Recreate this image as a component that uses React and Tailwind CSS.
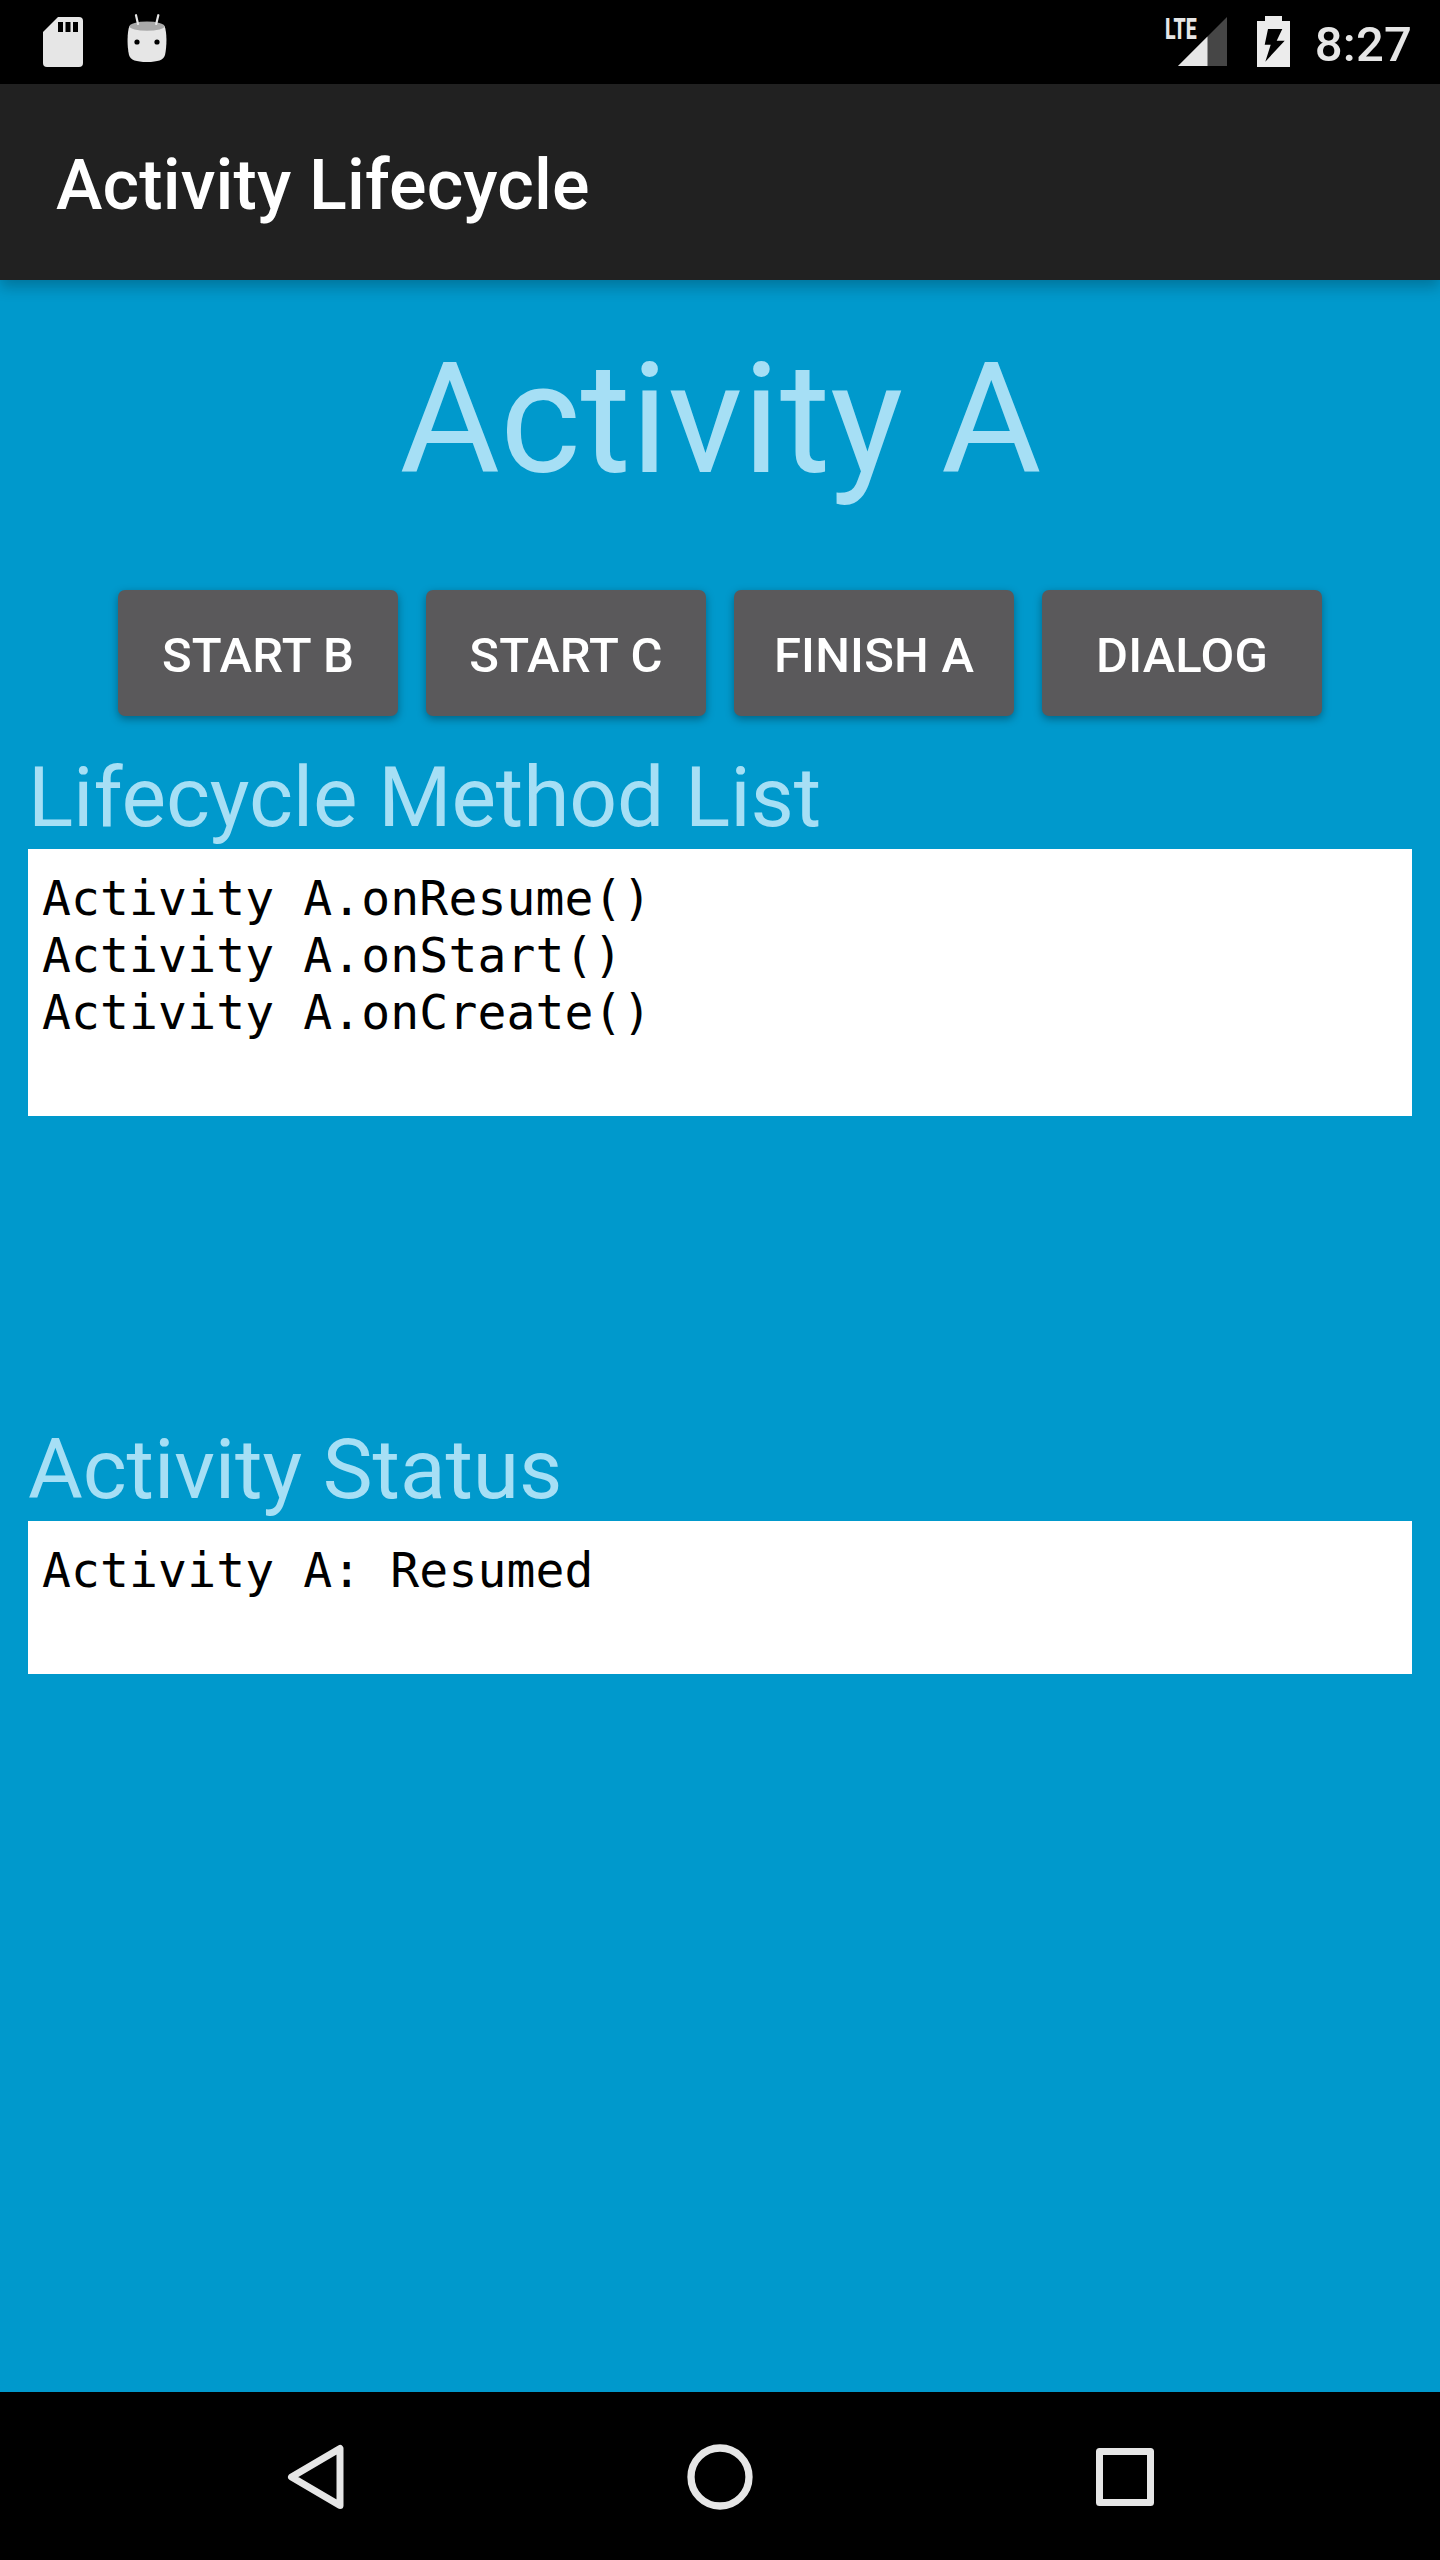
const heading = "relative text-[84px] leading-[98px] tracking-[-0.12px] text-[#a6dff5]";
const logBox = "bg-white px-3.5 font-['DejaVu_Sans_Mono',monospace] text-[48px] leading-[57px] tracking-[0.13px] text-black whitespace-pre";

function SdCardIcon() {
  return (
    <svg width="40" height="50" viewBox="0 0 40 50" fill="#e6e6e6">
      <path d="M15 0H36a4 4 0 0 1 4 4V46a4 4 0 0 1-4 4H4a4 4 0 0 1-4-4V15Z" />
      <path d="M15 5h5v10h-5zM22.500 5h5v10h-5zM30 5h5v10h-5z" fill="#000" />
    </svg>
  );
}

function RobotIcon() {
  return (
    <svg width="40" height="48" viewBox="0 0 40 48">
      <path d="M2.500 12C0 18 0 32 2 41C3.500 46 9 48 20 48S36.500 46 38 41C40 32 40 18 37.500 12Z" fill="#e6e6e6" />
      <ellipse cx="20" cy="12.200" rx="17.500" ry="4.600" fill="#a9a9a9" />
      <path d="M9 1.200L11 10M31.300 1.200L29.200 10" stroke="#e6e6e6" strokeWidth="2.200" strokeLinecap="round" />
      <circle cx="10" cy="28" r="2.600" />
      <circle cx="30" cy="28" r="2.600" />
    </svg>
  );
}

function SignalIcon() {
  return (
    <svg width="49" height="49" viewBox="0 0 49 49">
      <path d="M49 0V49H0Z" fill="#464646" />
      <path d="M29.500 19.500V49H0Z" fill="#e6e6e6" />
    </svg>
  );
}

function BatteryIcon() {
  return (
    <svg width="33" height="51" viewBox="0 0 33 51">
      <path d="M8 0H25V5H33V51H0V5H8Z" fill="#ececec" />
      <path d="M11 13H25.300L19.700 24.700H27.700L8.300 45.700L13.700 28.700H7.700Z" />
    </svg>
  );
}

export default function App() {
  return (
    <div className="flex h-[2560px] w-[1440px] flex-col overflow-hidden bg-[#0099cc] font-['Roboto',sans-serif]">
      <div className="flex h-[84px] shrink-0 items-start bg-black pl-[43px] pr-[28px] text-[#e6e6e6]">
        <div className="mt-[17px]"><SdCardIcon /></div>
        <div className="ml-[44px] mt-[14px]"><RobotIcon /></div>
        <div className="ml-auto flex items-start">
          <div className="mt-[12px] w-[13px] origin-left scale-x-[0.65] text-[30px] leading-[34px] font-extrabold">LTE</div>
          <div className="mt-[17px]"><SignalIcon /></div>
          <div className="ml-[30px] mt-[16px]"><BatteryIcon /></div>
          <div className="ml-[25px] mt-[16px] text-[49px] leading-[58px] font-medium tracking-[0.2px]">8:27</div>
        </div>
      </div>
      <div className="z-10 flex h-[196px] shrink-0 items-center bg-[#212121] pt-[5px] pl-[56px] shadow-[0_7px_14px_rgba(0,0,0,0.24)]">
        <h1 className="text-[70px] leading-[82px] font-medium tracking-[0.15px] text-white">Activity Lifecycle</h1>
      </div>
      <main className="flex flex-1 flex-col px-7 pt-[50px]">
        <h2 className="pl-[1px] text-center text-[154px] leading-[180px] tracking-[-0.1px] text-[#a6dff5]">Activity A</h2>
        <div className="mt-[80px] flex justify-center gap-7">
          {["START B", "START C", "FINISH A", "DIALOG"].map((label) => (
            <button
              key={label}
              className="h-[126px] w-[280px] rounded-[7px] bg-[#5a595b] pt-[5px] text-[49px] leading-[58px] font-medium tracking-[0.2px] text-white shadow-[0_3px_8px_rgba(0,0,0,0.35)]"
            >
              {label}
            </button>
          ))}
        </div>
        <h3 className={heading + " mt-[33px]"}>Lifecycle Method List</h3>
        <div className={logBox + " mt-[2px] h-[267px] pt-[21px]"}>
          {"Activity A.onResume()\nActivity A.onStart()\nActivity A.onCreate()"}
        </div>
        <h3 className={heading + " mt-[305px]"}>Activity Status</h3>
        <div className={logBox + " mt-[2px] h-[153px] pt-[21px]"}>Activity A: Resumed</div>
      </main>
      <nav className="flex h-[168px] shrink-0 items-center justify-between bg-black pt-[1px] pl-[287px] pr-[286px]">
        <svg width="57" height="66" viewBox="0 0 57 66" fill="none" stroke="#e6e6e6" strokeWidth="7" strokeLinejoin="round">
          <path d="M53 4.500V61.500L4.500 33Z" />
        </svg>
        <svg width="66" height="66" viewBox="0 0 66 66" fill="none" stroke="#e6e6e6" strokeWidth="7.300">
          <circle cx="33" cy="33" r="29" />
        </svg>
        <svg width="58" height="58" viewBox="0 0 58 58" fill="none" stroke="#e6e6e6" strokeWidth="7" strokeLinejoin="round">
          <path d="M3.500 3.500H54.500V54.500H3.500Z" />
        </svg>
      </nav>
    </div>
  );
}
